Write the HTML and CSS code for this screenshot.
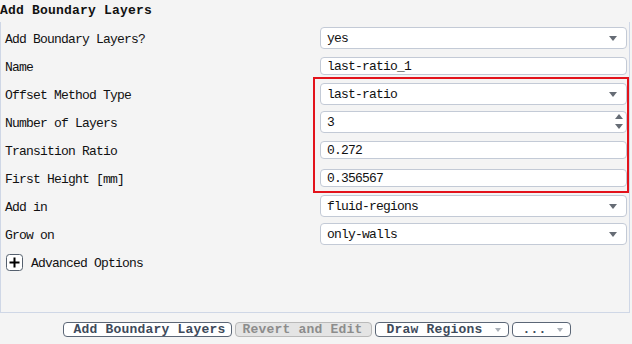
FILE: index.html
```html
<!DOCTYPE html>
<html lang="en">
<head>
  <meta charset="UTF-8" />
  <title>Add Boundary Layers</title>
  <link rel="stylesheet" href="styles.css">
</head>
<body>
  <h1 class="title">Add Boundary Layers</h1>

  <div class="panel">
    <div class="row">
      <label>Add Boundary Layers?</label>
      <div class="field select">yes<span class="caret"></span></div>
    </div>
    <div class="row">
      <label>Name</label>
      <div class="field text">last-ratio_1</div>
    </div>

    <div class="group">
      <div class="row">
        <label>Offset Method Type</label>
        <div class="field select">last-ratio<span class="caret"></span></div>
      </div>
      <div class="row">
        <label>Number of Layers</label>
        <div class="field text spin">3
          <span class="spinner"><span class="up"></span><span class="down"></span></span>
        </div>
      </div>
      <div class="row">
        <label>Transition Ratio</label>
        <div class="field text">0.272</div>
      </div>
      <div class="row">
        <label>First Height [mm]</label>
        <div class="field text">0.356567</div>
      </div>
    </div>

    <div class="row">
      <label>Add in</label>
      <div class="field select">fluid-regions<span class="caret"></span></div>
    </div>
    <div class="row">
      <label>Grow on</label>
      <div class="field select">only-walls<span class="caret"></span></div>
    </div>
    <div class="row">
      <div class="advanced">
        <svg class="plus" width="17" height="17" viewBox="0 0 17 17">
          <rect x="0.5" y="0.5" width="16" height="16" rx="3" fill="#fff" stroke="#55606e"/>
          <path d="M8.5 3.5v10M3.5 8.5h10" stroke="#000" stroke-width="2"/>
        </svg>
        <span>Advanced Options</span>
      </div>
    </div>
  </div>

  <div class="actions">
    <button class="btn btn-main">Add Boundary Layers</button>
    <button class="btn btn-off">Revert and Edit</button>
    <button class="btn btn-drop btn-draw">Draw Regions<span class="mini-caret"></span></button>
    <button class="btn btn-drop btn-more">...<span class="mini-caret"></span></button>
  </div>
</body>
</html>
```

FILE: styles.css
```css
:root {
  --bg: #f4f4f4;
  --line: #cfd7e6;
  --field-line: #c3cad6;
  --text: #111;
  --btn-text: #3e4a5b;
  --red: #e3131b;
}

* {
  margin: 0;
  padding: 0;
  box-sizing: border-box;
}

body, html {
  height: 100%;
  background: var(--bg);
  color: var(--text);
  font-family: 'Liberation Mono', 'DejaVu Sans Mono', monospace;
  font-size: 13px;
  letter-spacing: -0.8px;
  overflow: hidden;
}

.title {
  font-size: 13px;
  font-weight: bold;
  letter-spacing: 0.2px;
  height: 22px;
  line-height: 22px;
}

.panel {
  width: 630px;
  height: 291px;
  border: 1px solid var(--line);
  border-top: none;
  padding: 2px 3px 0 4px;
}

.row {
  display: grid;
  grid-template-columns: 315px 307px;
  align-items: center;
  height: 28px;
}

.row label {
  padding-top: 3px;
}

.group {
  position: relative;
}

.group::after {
  content: '';
  position: absolute;
  top: -3px;
  bottom: -1px;
  left: 308px;
  right: -3px;
  border: 2px solid var(--red);
  pointer-events: none;
}

.field {
  position: relative;
  background: #fff;
  border: 1px solid var(--field-line);
  border-radius: 4px;
  padding-left: 6px;
  display: flex;
  align-items: center;
}

.field.select {
  height: 22px;
}

.field.text {
  height: 18px;
}

.field.spin {
  height: 22px;
}

.caret {
  position: absolute;
  right: 9px;
  top: 8px;
  border-left: 4.5px solid transparent;
  border-right: 4.5px solid transparent;
  border-top: 5px solid #666c75;
}

.spinner {
  position: absolute;
  right: 3px;
  top: 2px;
  display: flex;
  flex-direction: column;
  gap: 5px;
}

.spinner .up {
  border-left: 4.5px solid transparent;
  border-right: 4.5px solid transparent;
  border-bottom: 5px solid #666c75;
}

.spinner .down {
  border-left: 4.5px solid transparent;
  border-right: 4.5px solid transparent;
  border-top: 5px solid #666c75;
}

.advanced {
  display: flex;
  align-items: center;
  gap: 8px;
  padding-left: 1px;
}

.advanced span {
  padding-top: 2px;
}

.actions {
  display: flex;
  justify-content: center;
  gap: 3px;
  padding-top: 9px;
  padding-left: 1px;
}

.btn {
  position: relative;
  height: 15px;
  font-family: inherit;
  font-size: 13px;
  font-weight: bold;
  letter-spacing: 0.2px;
  color: var(--btn-text);
  background: #fff;
  border: 1px solid #5b6676;
  border-radius: 4px;
  line-height: 12px;
  text-align: left;
  padding-left: 10px;
}

.btn-main {
  width: 169px;
}

.btn-off {
  width: 137px;
  color: #8c8c8c;
  background: #e4e4e4;
  border-color: #b9b9b9;
  padding-left: 7px;
}

.btn-draw {
  width: 134px;
  padding-left: 11px;
}

.btn-more {
  width: 59px;
  padding-left: 10px;
}

.mini-caret {
  position: absolute;
  right: 7px;
  top: 5px;
  border-left: 3.5px solid transparent;
  border-right: 3.5px solid transparent;
  border-top: 4px solid #aab0b8;
}
```
